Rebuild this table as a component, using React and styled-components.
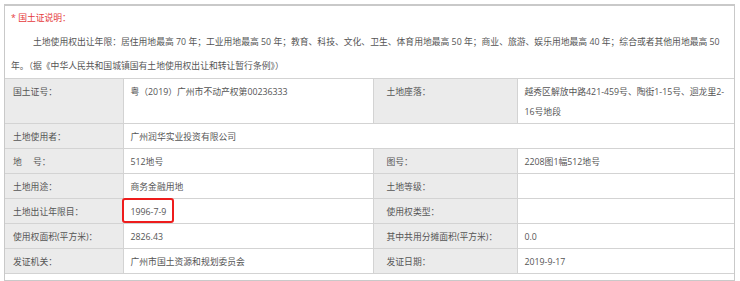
import React from 'react';
import styled, { createGlobalStyle } from 'styled-components';

const GlobalStyle = createGlobalStyle`
  body {
    margin: 0;
    background: #fff;
    font-family: "Open Sans", "Noto Sans CJK SC", sans-serif;
  }
`;

const Page = styled.div`
  padding: 4px 0 0 4px;
`;

const Panel = styled.div`
  width: 729px;
  border: 1px solid #c9c9c9;
  border-top-width: 2px;
  padding-bottom: 6px;
  background: #fff;
`;

const Notice = styled.div`
  padding: 0 6px;
  font-size: 8.8px;
  line-height: 24px;
  color: #555;
`;

const NoticeTitle = styled.div`
  color: #e5393c;
`;

const NoticeText = styled.p`
  margin: 0;
  text-indent: 22px;
  white-space: nowrap;
`;

const Table = styled.table`
  width: 100%;
  border-collapse: collapse;
  table-layout: fixed;
  font-size: 8.8px;
  color: #555;
`;

const Cell = styled.td`
  border: 1px solid #d3d3d3;
  padding: 3px 8px 1px;
  line-height: 20px;
  vertical-align: top;
  background: ${({ label }) => (label ? '#ebebeb' : '#fff')};
  padding-left: ${({ label, wide }) => (label ? (wide ? '13px' : '8px') : '7px')};
  &:first-child {
    border-left: none;
  }
  &:last-child {
    border-right: none;
    padding-right: 4px;
  }
`;

const Last = styled.tr`
  & > td {
    border-bottom: 1px solid #d3d3d3;
  }
`;

const Marked = styled.span`
  position: relative;
  &::after {
    content: '';
    position: absolute;
    left: -9px;
    right: -8px;
    top: -8px;
    bottom: -5px;
    border: 2px solid #ee1c1c;
    border-radius: 3px;
  }
`;

const rows = [
  ['土地使用者：', '广州润华实业投资有限公司'],
  ['地　 号：', '512地号', '图号：', '2208图1幅512地号'],
  ['土地用途：', '商务金融用地', '土地等级：', ''],
  ['土地出让年限目：', 'mark', '使用权类型：', ''],
  ['使用权面积(平方米)：', '2826.43', '其中共用分摊面积(平方米)：', '0.0'],
];

const App = () => {
  return (
    <Page>
      <GlobalStyle />
      <Panel>
        <Notice>
          <NoticeTitle>* 国土证说明：</NoticeTitle>
          <NoticeText>
            土地使用权出让年限：居住用地最高 70 年；工业用地最高 50 年；教育、科技、文化、卫生、体育用地最高 50 年；商业、旅游、娱乐用地最高 40 年；综合或者其他用地最高 50
          </NoticeText>
          <div>年。（据《中华人民共和国城镇国有土地使用权出让和转让暂行条例》）</div>
        </Notice>
        <Table>
          <colgroup>
            <col style={{ width: 118 }} />
            <col style={{ width: 250 }} />
            <col style={{ width: 144 }} />
            <col />
          </colgroup>
          <tbody>
            <tr>
              <Cell label>国土证号：</Cell>
              <Cell>粤（2019）广州市不动产权第00236333</Cell>
              <Cell label wide>土地座落：</Cell>
              <Cell>越秀区解放中路421-459号、陶街1-15号、迴龙里2-16号地段</Cell>
            </tr>
            {rows.map((r, i) =>
              r.length === 2 ? (
                <tr key={i}>
                  <Cell label>{r[0]}</Cell>
                  <Cell colSpan={3}>{r[1]}</Cell>
                </tr>
              ) : (
                <tr key={i}>
                  <Cell label>{r[0]}</Cell>
                  <Cell>{r[1] === 'mark' ? <Marked>1996-7-9</Marked> : r[1]}</Cell>
                  <Cell label wide>{r[2]}</Cell>
                  <Cell>{r[3]}</Cell>
                </tr>
              )
            )}
            <Last>
              <Cell label>发证机关：</Cell>
              <Cell>广州市国土资源和规划委员会</Cell>
              <Cell label wide>发证日期：</Cell>
              <Cell>2019-9-17</Cell>
            </Last>
          </tbody>
        </Table>
      </Panel>
    </Page>
  );
};

export default App;
